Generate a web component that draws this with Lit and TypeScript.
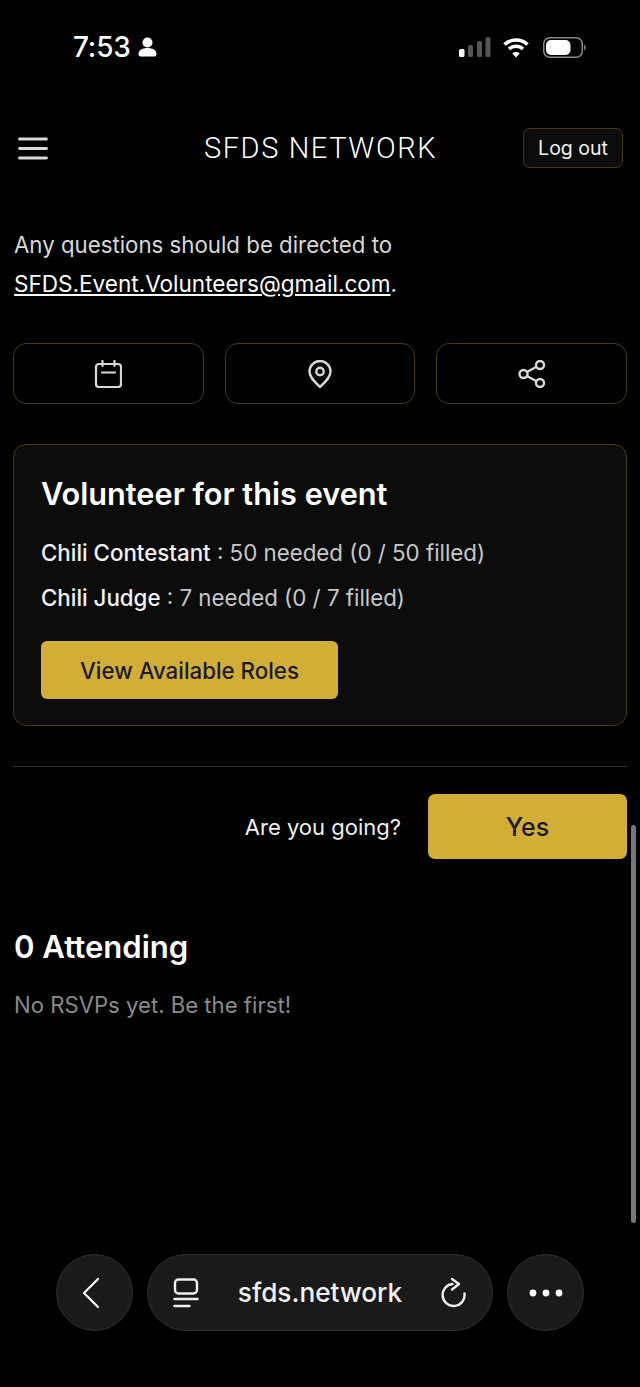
import { LitElement, html, css } from "lit";
import { customElement } from "lit/decorators.js";

@customElement("app-root")
export class AppRoot extends LitElement {
  static styles = css`
    :host {
      display: block;
      background: #000;
      color: #e6e6e6;
      font-family: Inter, "Liberation Sans", sans-serif;
    }
    .page {
      position: relative;
      display: flex;
      flex-direction: column;
      height: 1387px;
      overflow: hidden;
      background: #000;
    }

    /* status bar */
    .status {
      display: flex;
      align-items: center;
      height: 34px;
      margin-top: 30px;
      padding: 0 54px 0 73px;
    }
    .time {
      font-size: 28px;
      font-weight: 500;
      line-height: 34px;
      color: #fff;
      letter-spacing: -0.2px;
    }
    .person {
      margin-left: 7px;
    }
    .status-right {
      display: flex;
      align-items: center;
      margin-left: auto;
    }
    .wifi {
      margin-left: 12px;
    }
    .battery {
      margin-left: 14px;
    }

    /* site header */
    .header {
      display: grid;
      grid-template-columns: 1fr auto 1fr;
      align-items: center;
      height: 40px;
      margin-top: 64px;
      padding: 0 17px 0 18px;
    }
    .brand {
      font-family: Roboto, sans-serif;
      font-weight: 300;
      font-size: 29px;
      letter-spacing: 1.6px;
      color: #fff;
    }
    .logout {
      box-sizing: border-box;
      justify-self: end;
      width: 100px;
      height: 40px;
      display: flex;
      align-items: center;
      justify-content: center;
      background: #0c0c0c;
      border: 1px solid #463a18;
      border-radius: 7px;
      color: #f0f0f0;
      font-size: 19.5px;
    }

    .content {
      display: flex;
      flex-direction: column;
      padding: 0 13px;
    }
    .intro {
      margin: 57px 0 0 1px;
      font-size: 22.25px;
      line-height: 39px;
      color: #d8d8d8;
    }
    .intro a {
      color: #fff;
      font-size: 22.55px;
      text-decoration: underline;
    }

    .actions {
      display: grid;
      grid-template-columns: repeat(3, 1fr);
      gap: 21px;
      margin-top: 40px;
    }
    .action {
      box-sizing: border-box;
      height: 61px;
      display: flex;
      align-items: center;
      justify-content: center;
      border: 1px solid #463a18;
      border-radius: 13px;
    }

    .card {
      box-sizing: border-box;
      height: 282px;
      margin-top: 40px;
      padding: 27px 27px;
      background: #0c0c0c;
      border: 1px solid #463a18;
      border-radius: 13px;
    }
    .card h2 {
      margin: 0;
      font-size: 30.7px;
      line-height: 44px;
      font-weight: 600;
      color: #fff;
    }
    .role {
      margin: 0;
      font-size: 22.3px;
      line-height: 45px;
      color: #c8c8c8;
    }
    .roles {
      margin-top: 14px;
    }
    .role b {
      font-weight: 450;
      color: #f2f2f2;
    }
    .view {
      width: 297px;
      height: 58px;
      display: flex;
      align-items: center;
      justify-content: center;
      margin-top: 21px;
      background: #d3ae37;
      border-radius: 6px;
      color: #1a1a2e;
      font-size: 22.3px;
      font-weight: 450;
    }

    .divider {
      height: 1px;
      margin-top: 40px;
      background: #2e2e2e;
    }
    .going {
      display: flex;
      align-items: center;
      justify-content: flex-end;
      gap: 27px;
      margin-top: 27px;
      font-size: 22px;
      color: #f0f0f0;
    }
    .yes {
      width: 199px;
      height: 65px;
      display: flex;
      align-items: center;
      justify-content: center;
      background: #d3ae37;
      border-radius: 7px;
      color: #1a1a2e;
      font-size: 25px;
      font-weight: 450;
    }
    .attending {
      margin: 65px 0 0 1px;
      font-size: 31.1px;
      line-height: 46px;
      font-weight: 600;
      color: #fff;
    }
    .empty {
      margin: 18px 0 0 1px;
      font-size: 22.15px;
      line-height: 34px;
      color: #8a8a8a;
    }

    .scrollbar {
      position: absolute;
      left: 631px;
      top: 825px;
      width: 5px;
      height: 398px;
      border-radius: 3px;
      background: #777;
    }

    /* browser toolbar */
    .toolbar {
      display: flex;
      justify-content: center;
      gap: 14px;
      margin-top: auto;
      margin-bottom: 56px;
    }
    .round,
    .url {
      box-sizing: border-box;
      height: 77px;
      display: flex;
      align-items: center;
      background: #1a1a1a;
      border: 1px solid #2f2f2f;
    }
    .round {
      width: 77px;
      justify-content: center;
      border-radius: 50%;
    }
    .back {
      margin-right: 8px;
    }
    .url {
      width: 346px;
      border-radius: 39px;
      padding: 0 25px;
      justify-content: space-between;
    }
    .host {
      font-size: 26.2px;
      font-weight: 450;
      color: #f2f2f2;
    }
  `;

  render() {
    return html`
      <div class="page">
        <div class="status">
          <span class="time">7:53</span>
          <svg class="person" width="19" height="20" viewBox="0 0 19 20" fill="#fff">
            <circle cx="9.5" cy="5.5" r="5" />
            <path d="M0.5 17c0-4 4-6 9-6s9 2 9 6c0 1.500-.8 2.500-2 2.500H2.500C1.300 19.500.5 18.500.5 17z" />
          </svg>
          <div class="status-right">
            <svg width="32" height="22" viewBox="0 0 32 22">
              <rect x="0" y="13" width="5.500" height="8" rx="1.500" fill="#fff" />
              <rect x="9" y="9" width="5" height="12" rx="1.500" fill="#555" />
              <rect x="18" y="5" width="5" height="16" rx="1.500" fill="#555" />
              <rect x="26.500" y="1" width="5" height="20" rx="1.500" fill="#555" />
            </svg>
            <svg class="wifi" width="26" height="21" viewBox="0 0 26 21" fill="none" stroke="#fff" stroke-width="3.600">
              <path d="M1.500 7.500c6.500-6 16.500-6 23 0" />
              <path d="M6 12c4-3.600 10-3.600 14 0" />
              <path d="M13 20.500l-3.800-4.300c2.200-1.700 5.400-1.700 7.600 0z" fill="#fff" stroke="none" />
            </svg>
            <svg class="battery" width="43" height="21" viewBox="0 0 43 21">
              <rect x="0.750" y="0.750" width="38.500" height="19.500" rx="6" fill="none" stroke="#8a8a8a" stroke-width="1.500" />
              <rect x="3" y="3" width="24.500" height="15" rx="5" fill="#fff" />
              <path d="M41 7.500c1.200.5 1.800 1.600 1.800 3s-.6 2.500-1.800 3z" fill="#777" />
            </svg>
          </div>
        </div>

        <div class="header">
          <svg width="30" height="23" viewBox="0 0 30 23" stroke="#d8d8d8" stroke-width="2.800" stroke-linecap="round">
            <path d="M1.500 2h27M1.500 11.500h27M1.500 21h27" />
          </svg>
          <span class="brand">SFDS NETWORK</span>
          <div class="logout">Log out</div>
        </div>

        <div class="content">
          <p class="intro">
            Any questions should be directed to<br /><a>SFDS.Event.Volunteers@gmail.com</a>.
          </p>

          <div class="actions">
            <div class="action">
              <svg width="28" height="28" viewBox="0 0 28 28" fill="none" stroke="#d8d8d8" stroke-width="2.200" stroke-linecap="round">
                <rect x="2" y="4" width="25" height="23" rx="3" />
                <path d="M8.500 1v5M20.500 1v5M8 12.500h13" />
              </svg>
            </div>
            <div class="action">
              <svg width="24" height="28" viewBox="0 0 24 28" fill="none" stroke="#d8d8d8" stroke-width="2.400">
                <path d="M12 27C7 22 1.500 17.500 1.500 11.500a10.500 10.500 0 0 1 21 0C22.500 17.500 17 22 12 27z" stroke-linejoin="round" />
                <circle cx="12" cy="11.500" r="3.700" />
              </svg>
            </div>
            <div class="action">
              <svg width="28" height="28" viewBox="0 0 28 28" fill="none" stroke="#d8d8d8" stroke-width="2.400">
                <circle cx="5.500" cy="14" r="4" />
                <circle cx="22" cy="5" r="4" />
                <circle cx="22" cy="23" r="4" />
                <path d="M9 12l9.500-5.200M9 16l9.500 5.200" />
              </svg>
            </div>
          </div>

          <div class="card">
            <h2>Volunteer for this event</h2>
            <div class="roles">
              <p class="role"><b>Chili Contestant</b> : 50 needed (0 / 50 filled)</p>
              <p class="role"><b>Chili Judge</b> : 7 needed (0 / 7 filled)</p>
            </div>
            <div class="view">View Available Roles</div>
          </div>

          <div class="divider"></div>

          <div class="going">
            <span>Are you going?</span>
            <div class="yes">Yes</div>
          </div>

          <h2 class="attending">0 Attending</h2>
          <p class="empty">No RSVPs yet. Be the first!</p>
        </div>

        <div class="scrollbar"></div>

        <div class="toolbar">
          <div class="round">
            <svg class="back" width="20" height="32" viewBox="0 0 20 32" fill="none" stroke="#fff" stroke-width="2.200" stroke-linecap="round" stroke-linejoin="round">
              <path d="M17 2L3 16l14 14" />
            </svg>
          </div>
          <div class="url">
            <svg width="26" height="30" viewBox="0 0 26 30" fill="none" stroke="#f0f0f0" stroke-width="2.400" stroke-linecap="round">
              <rect x="2" y="1.500" width="22" height="14" rx="3.500" />
              <path d="M1.500 21h23M1.500 28h15" />
            </svg>
            <span class="host">sfds.network</span>
            <svg width="26" height="31" viewBox="0 0 26 31" fill="none" stroke="#f0f0f0" stroke-width="2.400" stroke-linecap="round" stroke-linejoin="round">
              <path d="M11.500 7A11 11 0 1 0 23.500 16.500" />
              <path d="M11 2l7 5-7 5.500" />
            </svg>
          </div>
          <div class="round">
            <svg width="34" height="8" viewBox="0 0 34 8" fill="#fff">
              <circle cx="4" cy="4" r="3.400" />
              <circle cx="17" cy="4" r="3.400" />
              <circle cx="30" cy="4" r="3.400" />
            </svg>
          </div>
        </div>
      </div>
    `;
  }
}
